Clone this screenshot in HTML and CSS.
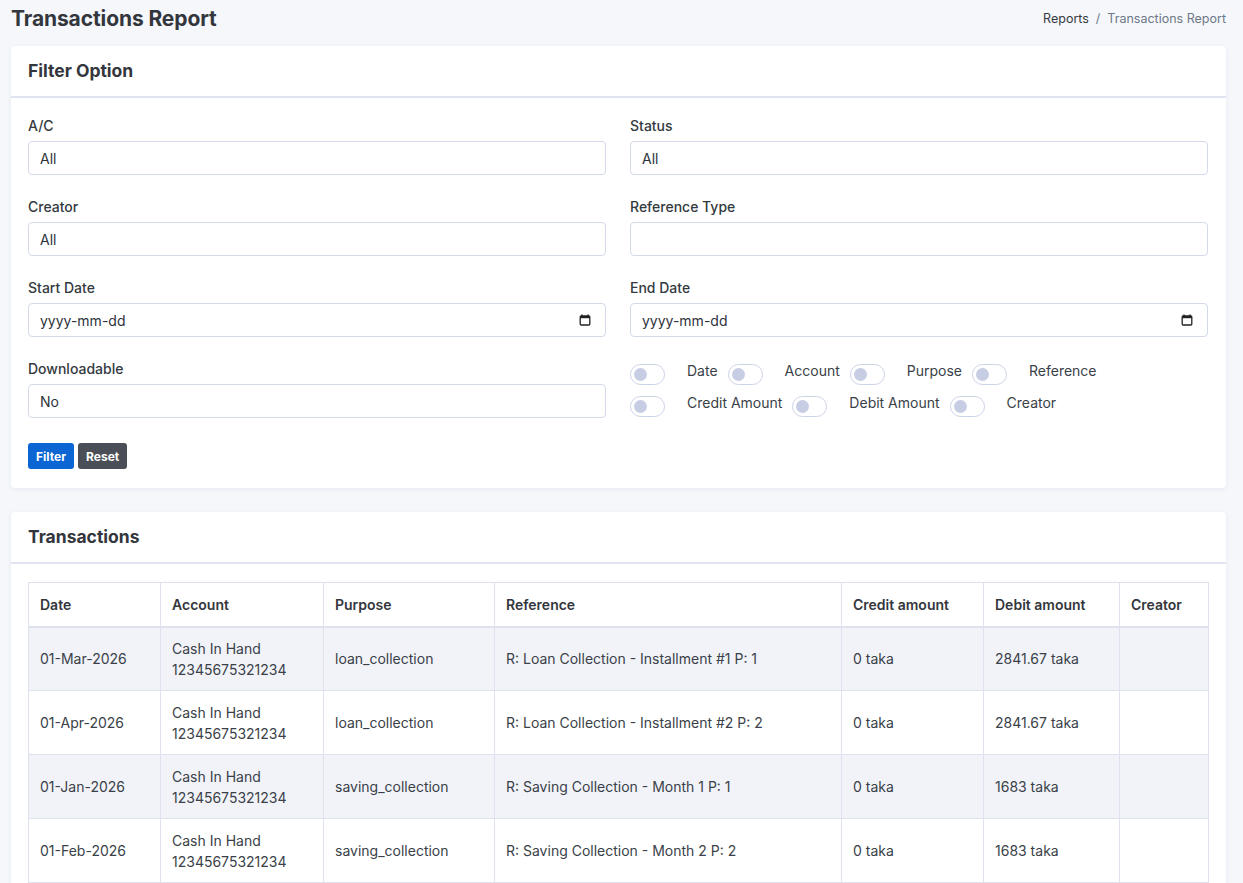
FILE: index.html
```html
<!DOCTYPE html>
<html lang="en">
<head>
<meta charset="utf-8">
<title>Transactions Report</title>
<link rel="stylesheet" href="styles.css">
</head>
<body>
<div class="page">
  <div class="page-head">
    <h1 class="page-title">Transactions Report</h1>
    <div class="breadcrumb"><span class="crumb">Reports</span><span class="sep">/</span><span class="crumb-active">Transactions Report</span></div>
  </div>

  <div class="card">
    <div class="card-header">Filter Option</div>
    <div class="card-body">
      <div class="form-grid">
        <div class="field">
          <label class="label">A/C</label>
          <div class="control">All</div>
        </div>
        <div class="field">
          <label class="label">Status</label>
          <div class="control">All</div>
        </div>
        <div class="field">
          <label class="label">Creator</label>
          <div class="control">All</div>
        </div>
        <div class="field">
          <label class="label">Reference Type</label>
          <div class="control"></div>
        </div>
        <div class="field">
          <label class="label">Start Date</label>
          <div class="control date"><span>yyyy-mm-dd</span>
            <svg class="cal" viewBox="0 0 12 12" width="12" height="12"><path d="M3 0.5v2M9 0.5v2" stroke="#222" stroke-width="1.4" fill="none"/><rect x="1.2" y="2" width="9.6" height="9" rx="1" fill="none" stroke="#222" stroke-width="1.3"/><rect x="1.2" y="2" width="9.6" height="2.2" fill="#222"/></svg>
          </div>
        </div>
        <div class="field">
          <label class="label">End Date</label>
          <div class="control date"><span>yyyy-mm-dd</span>
            <svg class="cal" viewBox="0 0 12 12" width="12" height="12"><path d="M3 0.5v2M9 0.5v2" stroke="#222" stroke-width="1.4" fill="none"/><rect x="1.2" y="2" width="9.6" height="9" rx="1" fill="none" stroke="#222" stroke-width="1.3"/><rect x="1.2" y="2" width="9.6" height="2.2" fill="#222"/></svg>
          </div>
        </div>
        <div class="field">
          <label class="label">Downloadable</label>
          <div class="control">No</div>
        </div>
        <div class="switches">
          <div class="switch-row">
            <span class="switch"></span><span class="switch-label">Date</span>
            <span class="switch"></span><span class="switch-label">Account</span>
            <span class="switch"></span><span class="switch-label">Purpose</span>
            <span class="switch"></span><span class="switch-label">Reference</span>
          </div>
          <div class="switch-row">
            <span class="switch"></span><span class="switch-label">Credit Amount</span>
            <span class="switch"></span><span class="switch-label">Debit Amount</span>
            <span class="switch"></span><span class="switch-label">Creator</span>
          </div>
        </div>
      </div>
      <div class="actions">
        <button class="btn btn-primary">Filter</button>
        <button class="btn btn-dark">Reset</button>
      </div>
    </div>
  </div>

  <div class="card">
    <div class="card-header">Transactions</div>
    <div class="card-body table-body">
      <table class="table">
        <colgroup>
          <col style="width:132px"><col style="width:163px"><col style="width:171px"><col style="width:347px"><col style="width:142px"><col style="width:136px"><col style="width:89px">
        </colgroup>
        <thead>
          <tr><th>Date</th><th>Account</th><th>Purpose</th><th>Reference</th><th>Credit amount</th><th>Debit amount</th><th>Creator</th></tr>
        </thead>
        <tbody>
          <tr class="odd"><td>01-Mar-2026</td><td>Cash In Hand<br>12345675321234</td><td>loan_collection</td><td>R: Loan Collection - Installment #1 P: 1</td><td>0 taka</td><td>2841.67 taka</td><td></td></tr>
          <tr><td>01-Apr-2026</td><td>Cash In Hand<br>12345675321234</td><td>loan_collection</td><td>R: Loan Collection - Installment #2 P: 2</td><td>0 taka</td><td>2841.67 taka</td><td></td></tr>
          <tr class="odd"><td>01-Jan-2026</td><td>Cash In Hand<br>12345675321234</td><td>saving_collection</td><td>R: Saving Collection - Month 1 P: 1</td><td>0 taka</td><td>1683 taka</td><td></td></tr>
          <tr><td>01-Feb-2026</td><td>Cash In Hand<br>12345675321234</td><td>saving_collection</td><td>R: Saving Collection - Month 2 P: 2</td><td>0 taka</td><td>1683 taka</td><td></td></tr>
        </tbody>
      </table>
    </div>
  </div>
</div>
</body>
</html>
```

FILE: styles.css
```css
* { box-sizing: border-box; }
html, body { margin: 0; padding: 0; }
body {
  background: #f5f7fb;
  font-family: Inter, "Noto Sans", "Liberation Sans", sans-serif;
  font-size: 14px;
  color: #333a44;
}
.page { padding: 0 17px 0 11px; }
.page-head {
  height: 36px;
  display: flex;
  align-items: center;
  justify-content: space-between;
  margin-bottom: 10px;
}
.page-title {
  margin: 0;
  font-size: 21px;
  font-weight: 700;
  color: #33363c;
  letter-spacing: -0.1px;
}
.breadcrumb { font-size: 12.5px; color: #6e7787; }
.crumb { color: #343a40; }
.sep { margin: 0 7px; color: #6e7787; }
.crumb-active { color: #6e7787; }

.card {
  background: #fff;
  border-radius: 4px;
  box-shadow: 0 1px 4px rgba(40, 60, 120, 0.08);
  margin-bottom: 24px;
}
.card-header {
  height: 52px;
  padding: 0 17px 2px;
  display: flex;
  align-items: center;
  font-size: 17.5px;
  font-weight: 700;
  color: #33363c;
  border-bottom: 2px solid #dfe4f0;
}
.card-body { padding: 18px 18px 19px 17px; }
.table-body { padding-top: 18px; }

.form-grid {
  display: grid;
  grid-template-columns: 1fr 1fr;
  column-gap: 24px;
  row-gap: 22px;
}
.field { display: flex; flex-direction: column; }
.label {
  display: block;
  line-height: 20px;
  font-weight: 500;
  color: #343a40;
  margin-bottom: 5px;
}
.control {
  height: 34px;
  border: 1px solid #d4daea;
  border-radius: 4px;
  padding: 0 11px;
  display: flex;
  align-items: center;
  color: #2e333b;
  background: #fff;
}
.control.date { justify-content: space-between; padding-right: 14px; }
.cal { display: block; }

.switches {
  display: flex;
  flex-direction: column;
  gap: 12px;
  padding-top: 5px;
}
.switch-row {
  display: flex;
  align-items: center;
  height: 20px;
}
.switch {
  position: relative;
  width: 35px;
  height: 21px;
  border: 1px solid #cdd3e6;
  border-radius: 11px;
  background: #fff;
  flex: none;
}
.switch::after {
  content: "";
  position: absolute;
  left: 3px;
  top: 3px;
  width: 13px;
  height: 13px;
  border-radius: 50%;
  background: #c7cde3;
}
.switch-label {
  margin-left: 22px;
  margin-right: 10px;
  color: #3a3f48;
  position: relative;
  top: -4px;
}

.actions { display: flex; gap: 4px; margin-top: 25px; }
.btn {
  height: 26px;
  padding: 0 8px;
  border: none;
  border-radius: 3px;
  font-family: inherit;
  font-size: 12px;
  font-weight: 700;
  color: #fff;
}
.btn-primary { background: #0b66d4; }
.btn-dark { background: #4a4f57; }

.table {
  width: 1180px;
  border-collapse: collapse;
  table-layout: fixed;
}
.table th, .table td {
  border: 1px solid #dde2ee;
  text-align: left;
  padding: 0 11px;
  vertical-align: middle;
}
.table th {
  height: 44px;
  font-weight: 600;
  color: #33363c;
  border-bottom: 2px solid #dde2ee;
}
.table td {
  height: 64px;
  line-height: 21px;
  color: #3a3f48;
}
.table tr.odd td { background: #f1f3f8; }
```
